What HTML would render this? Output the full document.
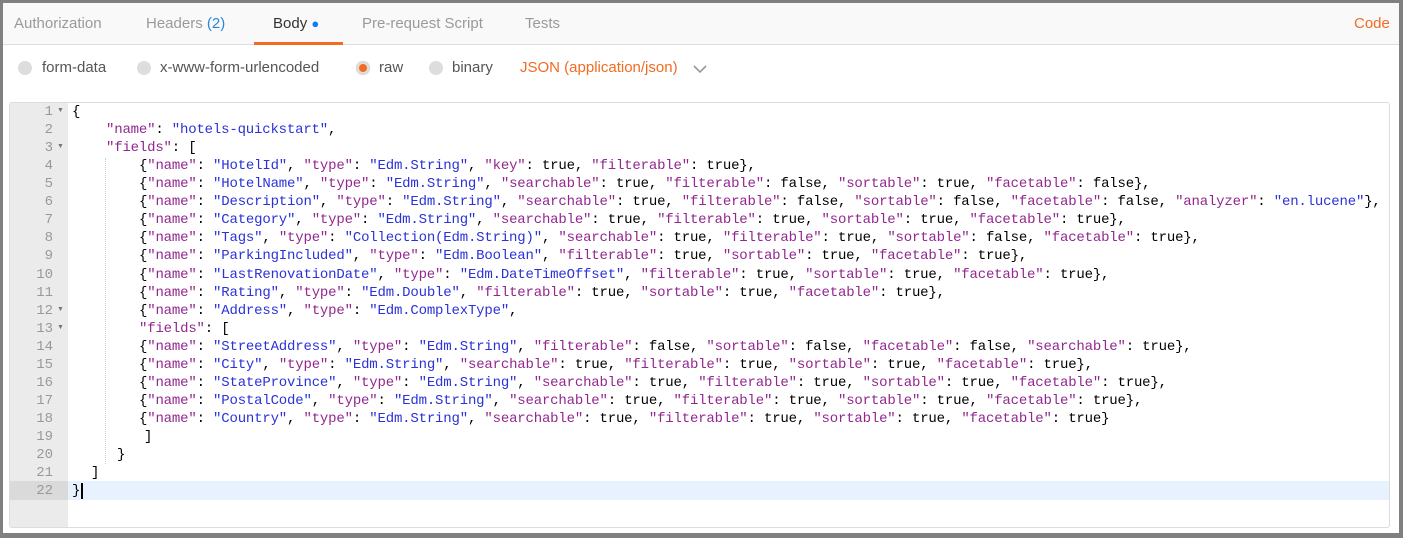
<!DOCTYPE html>
<html><head><meta charset="utf-8"><style>
*{margin:0;padding:0;box-sizing:border-box}
body{width:1403px;height:538px;background:#808080;position:relative;overflow:hidden;font-family:"Liberation Sans",sans-serif}
#f{position:absolute;left:3px;top:3px;width:1396px;height:530px;background:#fff}
#tabs{position:absolute;left:0;top:0;width:1396px;height:42px;background:#f9f9f9;border-bottom:1px solid #ddd}
.t{position:absolute;top:12px;font-size:15px;color:#9a9a9a}
#ul{position:absolute;left:251px;top:39px;width:89px;height:3px;background:#f26b21}
.r{position:absolute;top:56px;font-size:15px;color:#555}
.rd{position:absolute;top:58px;width:14px;height:14px;border-radius:50%;background:#ddd}
#ed{position:absolute;left:6px;top:99px;width:1381px;height:426px;border:1px solid #ddd;border-radius:3px;overflow:hidden}
#gut{position:absolute;left:0;top:0;width:58px;height:100%;background:#ebebeb}
.ln{position:absolute;left:0;width:58px;height:18px;text-align:right;padding-right:15px;font:14px/18px "Liberation Mono",monospace;color:#999}
.ar{position:absolute;left:47px;font-size:7px;color:#777}
.cl{position:absolute;left:58px;height:18px;font:14px/18px "Liberation Mono",monospace;letter-spacing:-0.18px;white-space:pre;color:#000}
.k{color:#92278f}.s{color:#2a32d8}
</style></head><body><div id="f">
<div id="tabs">
<span class="t" style="left:11px">Authorization</span>
<span class="t" style="left:143px">Headers <span style="color:#2a87d8">(2)</span></span>
<span class="t" style="left:270px;color:#333">Body <span style="color:#0a7cf5;font-size:13px">●</span></span>
<span class="t" style="left:359px">Pre-request Script</span>
<span class="t" style="left:522px">Tests</span>
<span class="t" style="left:1351px;color:#f26b21">Code</span>
<div id="ul"></div>
</div>
<div class="rd" style="left:15px"></div><span class="r" style="left:39px">form-data</span>
<div class="rd" style="left:134px"></div><span class="r" style="left:157px">x-www-form-urlencoded</span>
<div class="rd" style="left:353px;background:#f26b21;box-shadow:inset 0 0 0 3px #ddd"></div><span class="r" style="left:376px">raw</span>
<div class="rd" style="left:426px"></div><span class="r" style="left:449px">binary</span>
<span class="r" style="left:517px;color:#f26b21">JSON (application/json)</span>
<svg style="position:absolute;left:690px;top:62px" width="14" height="9"><path d="M1 1L7 7L13 1" stroke="#999" stroke-width="1.6" fill="none"/></svg>
<div id="ed">
<div id="gut"></div>
<div style="position:absolute;left:0;top:378px;width:1381px;height:19px;background:#e8f2ff"></div>
<div style="position:absolute;left:0;top:378px;width:58px;height:19px;background:#dadada"></div>
<div style="position:absolute;left:95px;top:55px;height:306px;border-left:1px dotted #ccc"></div>
<div id="code"></div>
</div>
</div>
<script>
var L=[
[0,'{'],
[34,'«"name"»: ‹"hotels-quickstart"›,'],
[34,'«"fields"»: ['],
[67,'{«"name"»: ‹"HotelId"›, «"type"»: ‹"Edm.String"›, «"key"»: true, «"filterable"»: true},'],
[67,'{«"name"»: ‹"HotelName"›, «"type"»: ‹"Edm.String"›, «"searchable"»: true, «"filterable"»: false, «"sortable"»: true, «"facetable"»: false},'],
[67,'{«"name"»: ‹"Description"›, «"type"»: ‹"Edm.String"›, «"searchable"»: true, «"filterable"»: false, «"sortable"»: false, «"facetable"»: false, «"analyzer"»: ‹"en.lucene"›},'],
[67,'{«"name"»: ‹"Category"›, «"type"»: ‹"Edm.String"›, «"searchable"»: true, «"filterable"»: true, «"sortable"»: true, «"facetable"»: true},'],
[67,'{«"name"»: ‹"Tags"›, «"type"»: ‹"Collection(Edm.String)"›, «"searchable"»: true, «"filterable"»: true, «"sortable"»: false, «"facetable"»: true},'],
[67,'{«"name"»: ‹"ParkingIncluded"›, «"type"»: ‹"Edm.Boolean"›, «"filterable"»: true, «"sortable"»: true, «"facetable"»: true},'],
[67,'{«"name"»: ‹"LastRenovationDate"›, «"type"»: ‹"Edm.DateTimeOffset"›, «"filterable"»: true, «"sortable"»: true, «"facetable"»: true},'],
[67,'{«"name"»: ‹"Rating"›, «"type"»: ‹"Edm.Double"›, «"filterable"»: true, «"sortable"»: true, «"facetable"»: true},'],
[67,'{«"name"»: ‹"Address"›, «"type"»: ‹"Edm.ComplexType"›,'],
[67,'«"fields"»: ['],
[67,'{«"name"»: ‹"StreetAddress"›, «"type"»: ‹"Edm.String"›, «"filterable"»: false, «"sortable"»: false, «"facetable"»: false, «"searchable"»: true},'],
[67,'{«"name"»: ‹"City"›, «"type"»: ‹"Edm.String"›, «"searchable"»: true, «"filterable"»: true, «"sortable"»: true, «"facetable"»: true},'],
[67,'{«"name"»: ‹"StateProvince"›, «"type"»: ‹"Edm.String"›, «"searchable"»: true, «"filterable"»: true, «"sortable"»: true, «"facetable"»: true},'],
[67,'{«"name"»: ‹"PostalCode"›, «"type"»: ‹"Edm.String"›, «"searchable"»: true, «"filterable"»: true, «"sortable"»: true, «"facetable"»: true},'],
[67,'{«"name"»: ‹"Country"›, «"type"»: ‹"Edm.String"›, «"searchable"»: true, «"filterable"»: true, «"sortable"»: true, «"facetable"»: true}'],
[72,']'],
[45,'}'],
[19,']'],
[0,'}<span style="border-left:2px solid #000;margin-left:1px"></span>']
];
var h='';
for(var i=0;i<L.length;i++){
var y=(i*18.05).toFixed(1);
var t=L[i][1].replace(/«/g,'<span class="k">').replace(/‹/g,'<span class="s">').replace(/[»›]/g,'</span>');
h+='<div class="ln" style="top:'+y+'px">'+(i+1)+'</div>';
if([0,2,11,12].indexOf(i)>=0)h+='<div class="ar" style="top:'+(+y+4)+'px">▼</div>';
h+='<div class="cl" style="top:'+y+'px;left:'+(62+L[i][0])+'px">'+t+'</div>';
}
document.getElementById('code').innerHTML=h;
</script>
</body></html>
